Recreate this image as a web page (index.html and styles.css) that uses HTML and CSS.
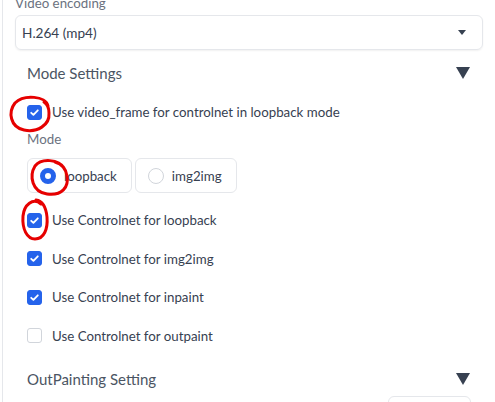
FILE: index.html
```html
<!DOCTYPE html>
<html>
<head>
<meta charset="utf-8">
<link rel="stylesheet" href="styles.css">
</head>
<body>
<div class="page">
  <div class="field">
    <div class="label">Video encoding</div>
    <div class="select">
      <span>H.264 (mp4)</span>
      <svg class="caret" width="8" height="5" viewBox="0 0 8 5"><polygon points="0,0 8,0 4,5" fill="#374151"/></svg>
    </div>
  </div>

  <div class="accordion">
    <div class="acc-head">
      <span>Mode Settings</span>
      <svg class="tri" width="14" height="12" viewBox="0 0 14 12"><polygon points="0,0 14,0 7,12" fill="#374151"/></svg>
    </div>
    <div class="acc-body">
      <label class="check first"><span class="box on"><svg width="15" height="15" viewBox="0 0 15 15"><path d="M4.2 7.8 L6.4 9.9 L10.8 5.3" fill="none" stroke="#fff" stroke-width="1.8" stroke-linecap="round" stroke-linejoin="round"/></svg></span>Use video_frame for controlnet in loopback mode</label>
      <div class="label mode-label">Mode</div>
      <div class="radios">
        <label class="radio"><span class="dot on"></span>loopback</label>
        <label class="radio"><span class="dot"></span>img2img</label>
      </div>
      <label class="check"><span class="box on"><svg width="15" height="15" viewBox="0 0 15 15"><path d="M4.2 7.8 L6.4 9.9 L10.8 5.3" fill="none" stroke="#fff" stroke-width="1.8" stroke-linecap="round" stroke-linejoin="round"/></svg></span>Use Controlnet for loopback</label>
      <label class="check"><span class="box on"><svg width="15" height="15" viewBox="0 0 15 15"><path d="M4.2 7.8 L6.4 9.9 L10.8 5.3" fill="none" stroke="#fff" stroke-width="1.8" stroke-linecap="round" stroke-linejoin="round"/></svg></span>Use Controlnet for img2img</label>
      <label class="check"><span class="box on"><svg width="15" height="15" viewBox="0 0 15 15"><path d="M4.2 7.8 L6.4 9.9 L10.8 5.3" fill="none" stroke="#fff" stroke-width="1.8" stroke-linecap="round" stroke-linejoin="round"/></svg></span>Use Controlnet for inpaint</label>
      <label class="check"><span class="box"></span>Use Controlnet for outpaint</label>
    </div>
  </div>

  <div class="accordion second">
    <div class="acc-head">
      <span>OutPainting Setting</span>
      <svg class="tri" width="14" height="12" viewBox="0 0 14 12"><polygon points="0,0 14,0 7,12" fill="#374151"/></svg>
    </div>
    <div class="acc-body">
      <div class="num-row"><span class="label">Width</span><div class="num"></div></div>
    </div>
  </div>
</div>

<svg class="annot" width="495" height="402" viewBox="0 0 495 402">
  <g fill="none" stroke="#e60000" stroke-width="3" stroke-linecap="round" stroke-linejoin="round">
    <path d="M48,106 C46,96 24,94 15,103 C8,112 10,127 24,130 C37,133 50,125 49,113 C49,108 47,104 44,102"/>
    <path d="M64,168 C59,159 41,158 35,166 C29,176 32,192 47,194 C62,196 69,187 67,176 C66,169 62,164 55,162"/>
    <path d="M41,204 C33,197 24,205 23,216 C22,229 27,239 35,239 C44,239 48,229 47,217 C46,207 43,201 36,200"/>
  </g>
</svg>
</body>
</html>
```

FILE: styles.css
```css
html, body {
  margin: 0;
  padding: 0;
  background: #ffffff;
}

body {
  font-family: Lato, "Liberation Sans", sans-serif;
  font-size: 13.3px;
  color: #374151;
  overflow: hidden;
  width: 495px;
  height: 402px;
}

.page {
  margin-left: 2px;
  border-left: 1px solid #e5e7eb;
  padding: 0 12px;
  height: 402px;
  overflow: hidden;
}

.label {
  color: #6b7280;
  font-size: 13.3px;
  line-height: 20px;
  height: 20px;
}

.field .label {
  margin-top: -7px;
}

.select {
  margin-top: 2px;
  height: 35px;
  box-sizing: border-box;
  border: 1px solid #e5e7eb;
  border-radius: 6px;
  box-shadow: 0 1px 2px rgba(0, 0, 0, 0.06);
  display: flex;
  align-items: center;
  justify-content: space-between;
  padding: 0 16px 0 6px;
  color: #374151;
  font-size: 13.6px;
}

.caret {
  display: block;
}

.accordion {
  margin-top: 10px;
}

.accordion.second {
  margin-top: 18.5px;
}

.acc-head {
  height: 26px;
  display: flex;
  align-items: center;
  justify-content: space-between;
  padding: 0 13px 0 12px;
  font-size: 15px;
  color: #4b5563;
}

.tri {
  display: block;
}

.acc-body {
  padding-left: 12px;
}

.check {
  display: flex;
  align-items: center;
  gap: 10px;
  height: 24px;
  margin-top: 14.5px;
  color: #374151;
}

.check.first {
  margin-top: 14px;
}

.mode-label + .radios + .check {
  margin-top: 15px;
}

.box {
  width: 15px;
  height: 15px;
  box-sizing: border-box;
  border-radius: 3px;
  border: 1px solid #d1d5db;
  background: #fff;
  display: flex;
  align-items: center;
  justify-content: center;
  flex: none;
}

.box.on {
  background: #2563eb;
  border-color: #2563eb;
}

.box svg {
  display: block;
  flex: none;
}

.mode-label {
  margin-top: 5px;
}

.radios {
  margin-top: 9px;
  display: flex;
  gap: 3px;
}

.radio {
  height: 35px;
  box-sizing: border-box;
  border: 1px solid #e5e7eb;
  border-radius: 6px;
  display: flex;
  align-items: center;
  gap: 8px;
  padding: 0 14px 0 12px;
  color: #374151;
}

.dot {
  width: 16px;
  height: 16px;
  box-sizing: border-box;
  border-radius: 50%;
  border: 1px solid #d1d5db;
  background: #fff;
  flex: none;
}

.dot.on {
  border: 5px solid #2563eb;
  background: #fff;
}

.num-row {
  margin-top: 4px;
  display: flex;
  justify-content: space-between;
  align-items: flex-start;
  padding-right: 12px;
}

.num-row .label {
  margin-top: 2px;
}

.num {
  width: 83px;
  height: 30px;
  box-sizing: border-box;
  border: 1px solid #e5e7eb;
  border-radius: 6px;
}

.annot {
  position: absolute;
  top: 0;
  left: 0;
  pointer-events: none;
}
```
